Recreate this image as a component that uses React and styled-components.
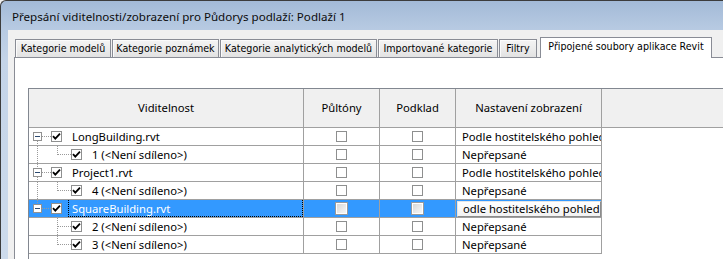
import React from 'react';
import styled, { createGlobalStyle, css } from 'styled-components';

const Global = createGlobalStyle`
  html, body { margin: 0; padding: 0; }
  body {
    width: 723px; height: 259px; overflow: hidden; background: #f0f0f0;
    font-family: "Noto Sans", "Open Sans", sans-serif;
  }
`;

const Window = styled.div`
  width: 723px; height: 259px; box-sizing: border-box;
  border-top: 1px solid #3c3c3c; border-left: 1px solid #3c3c3c;
  border-top-left-radius: 6px;
  background: linear-gradient(180deg, #a3bad7 0px, #b7cae2 28px, #c4d4e8 60px, #cddbec 100%);
  display: flex; flex-direction: column; overflow: hidden;
`;

const TitleBar = styled.div`
  height: 29px; flex: none;
  display: flex; align-items: center;
  padding-left: 11px; padding-top: 1px; box-sizing: border-box;
  font-size: 11.6px; color: #0c0c0c; white-space: nowrap;
`;

const Body = styled.div`
  flex: 1; margin-left: 7px;
  background: #f0f0f0;
  display: flex; flex-direction: column;
  padding: 7px 0 0 6px;
  min-height: 0;
`;

const TabStrip = styled.div`
  display: flex; align-items: flex-end;
  height: 21px; margin-bottom: -1px;
  padding-left: 1px;
  position: relative; z-index: 1;
`;

const Tab = styled.div`
  box-sizing: border-box;
  width: ${p => p.$w}px;
  height: 18px; margin-bottom: 1px; margin-right: 1px;
  border: 1px solid #898c95; border-bottom: none;
  background: linear-gradient(180deg, #f4f4f4 0%, #ececec 50%, #e2e2e2 100%);
  box-shadow: inset 1px 1px 0 #fbfbfb;
  font-family: "DejaVu Sans Condensed", "DejaVu Sans", sans-serif;
  font-size: 10.6px; color: #000; white-space: nowrap; overflow: hidden;
  display: flex; align-items: center; justify-content: center;
  padding-bottom: 1px;
  ${p => p.$active && css`
    height: 21px; margin-bottom: 0; margin-left: 2px;
    background: #fff; box-shadow: none;
    padding-bottom: 4px;
  `}
`;

const Panel = styled.div`
  flex: 1; min-height: 0;
  background: #fff;
  border-top: 1px solid #898c95; border-left: 1px solid #898c95;
  padding: 30px 0 0 13px;
  overflow: hidden;
`;

const Grid = styled.div`
  border-left: 1px solid #828790;
  border-top: 1px solid #828790;
  font-size: 11.25px; color: #000;
  height: 200px;
`;

const cols = css`
  display: grid;
  grid-template-columns: 275px 76px 76px 146px 1fr;
`;

const HeaderRow = styled.div`
  ${cols};
  height: 39px;
  background: #f0f0f0;
`;

const HeadCell = styled.div`
  box-sizing: border-box;
  border-right: 1px solid #a0a0a0;
  border-bottom: 1px solid #a0a0a0;
  display: flex; align-items: center; justify-content: center;
  padding-bottom: 1px;
  ${p => p.$last && css`border-right: none;`}
`;

const Row = styled.div`
  ${cols};
  height: 18px;
`;

const Cell = styled.div`
  box-sizing: border-box;
  border-right: 1px solid #a0a0a0;
  border-bottom: 1px solid #a0a0a0;
  display: flex; align-items: center;
  white-space: nowrap; overflow: hidden;
  background: ${p => (p.$sel ? '#3399ff' : '#fff')};
  ${p => p.$center && css`justify-content: center;`}
  ${p => p.$pad && css`padding-left: 6px;`}
`;

const Filler = styled.div`
  background: #fff;
`;

const TreeCell = styled(Cell)`
  padding-left: 4px;
`;

const Label = styled.span`
  box-sizing: border-box;
  height: 18px; margin-top: -1px;
  display: flex; align-items: center;
  padding-left: 4px;
  margin-left: ${p => p.$gap}px;
  flex: 1;
  color: ${p => (p.$sel ? '#fff' : '#000')};
  ${p => p.$sel && css`
    outline: 1px dotted #000; outline-offset: -1px;
  `}
`;

const Box = styled.span`
  box-sizing: border-box;
  width: 11px; height: 11px; flex: none;
  border: 1px solid #8e8f8f;
  background: ${p => (p.$dim
    ? 'linear-gradient(135deg, #d4d4d4 0%, #ececec 60%, #f8f8f8 100%)'
    : '#fff')};
  ${p => p.$dim && css`box-shadow: 0 0 0 1px #ffffff inset; border-color: #9a9a9a; width: 13px; height: 13px;`}
  display: flex; align-items: center; justify-content: center;
`;

const Combo = styled.div`
  box-sizing: border-box;
  margin: 0 0 0 1px; height: 16px; flex: 1;
  background: linear-gradient(180deg, #ffffff 0%, #f2f2f2 100%);
  border: 1px solid;
  border-color: #e6e6e6 #8c8c8c #8c8c8c #e6e6e6;
  display: flex; align-items: center; padding-left: 5px;
  color: #000;
`;

const Gutter = styled.svg`
  flex: none; display: block;
`;

const CheckBox = ({ checked, dim }) => (
  <Box $dim={dim}>
    {checked && (
      <svg width="9" height="9" viewBox="0 0 9 9">
        <path d="M1 4.2 L3.3 6.6 L8 1.6" fill="none" stroke="#000" strokeWidth="1.8" />
      </svg>
    )}
  </Box>
);

const dots = {
  stroke: '#9a9a9a', strokeWidth: 1, strokeDasharray: '1 1', shapeRendering: 'crispEdges',
};

const TreeLines = ({ level, up, down, through, last }) => {
  if (level === 0) {
    return (
      <Gutter width="18" height="17" viewBox="0 0 18 17">
        {up && <line x1="4.5" y1="0" x2="4.5" y2="4" {...dots} />}
        {down && <line x1="4.5" y1="13" x2="4.5" y2="18" {...dots} />}
        <line x1="9" y1="8.5" x2="18" y2="8.5" {...dots} />
        <rect x="0.5" y="4.5" width="8" height="8" fill="#fff" stroke="#919191" shapeRendering="crispEdges" />
        <line x1="2" y1="8.5" x2="7" y2="8.5" stroke="#2c4a70" shapeRendering="crispEdges" />
      </Gutter>
    );
  }
  return (
    <Gutter width="38" height="17" viewBox="0 0 38 17">
      {through && <line x1="4.5" y1="0" x2="4.5" y2="18" {...dots} />}
      <line x1="24.5" y1="0" x2="24.5" y2={last ? 9 : 18} {...dots} />
      <line x1="25" y1="8.5" x2="38" y2="8.5" {...dots} />
    </Gutter>
  );
};

const rows = [
  { level: 0, name: 'LongBuilding.rvt', mode: 'Podle hostitelského pohled', down: true },
  { level: 1, name: '1 (<Není sdíleno>)', mode: 'Nepřepsané', through: true, last: true },
  { level: 0, name: 'Project1.rvt', mode: 'Podle hostitelského pohled', up: true, down: true },
  { level: 1, name: '4 (<Není sdíleno>)', mode: 'Nepřepsané', through: true, last: true },
  { level: 0, name: 'SquareBuilding.rvt', mode: 'odle hostitelského pohled', up: true, sel: true },
  { level: 1, name: '2 (<Není sdíleno>)', mode: 'Nepřepsané' },
  { level: 1, name: '3 (<Není sdíleno>)', mode: 'Nepřepsané', last: true },
];

const tabs = [
  { t: 'Kategorie modelů', w: 96 },
  { t: 'Kategorie poznámek', w: 107 },
  { t: 'Kategorie analytických modelů', w: 157 },
  { t: 'Importované kategorie', w: 120 },
  { t: 'Filtry', w: 38 },
  { t: 'Připojené soubory aplikace Revit', w: 172, active: true },
];

export default function App() {
  return (
    <>
      <Global />
      <Window>
        <TitleBar>Přepsání viditelnosti/zobrazení pro Půdorys podlaží: Podlaží 1</TitleBar>
        <Body>
          <TabStrip>
            {tabs.map(t => (
              <Tab key={t.t} $w={t.w} $active={t.active}>{t.t}</Tab>
            ))}
          </TabStrip>
          <Panel>
            <Grid>
              <HeaderRow>
                <HeadCell>Viditelnost</HeadCell>
                <HeadCell>Půltóny</HeadCell>
                <HeadCell>Podklad</HeadCell>
                <HeadCell>Nastavení zobrazení</HeadCell>
                <HeadCell $last />
              </HeaderRow>
              {rows.map(r => (
                <Row key={r.name}>
                  <TreeCell $sel={r.sel}>
                    <TreeLines {...r} />
                    <CheckBox checked />
                    <Label $sel={r.sel} $gap={6}>{r.name}</Label>
                  </TreeCell>
                  <Cell $sel={r.sel} $center><CheckBox dim={r.sel} /></Cell>
                  <Cell $sel={r.sel} $center><CheckBox dim={r.sel} /></Cell>
                  {r.sel ? (
                    <Cell $sel><Combo>{r.mode}</Combo></Cell>
                  ) : (
                    <Cell $pad>{r.mode}</Cell>
                  )}
                  <Filler />
                </Row>
              ))}
            </Grid>
          </Panel>
        </Body>
      </Window>
    </>
  );
}
